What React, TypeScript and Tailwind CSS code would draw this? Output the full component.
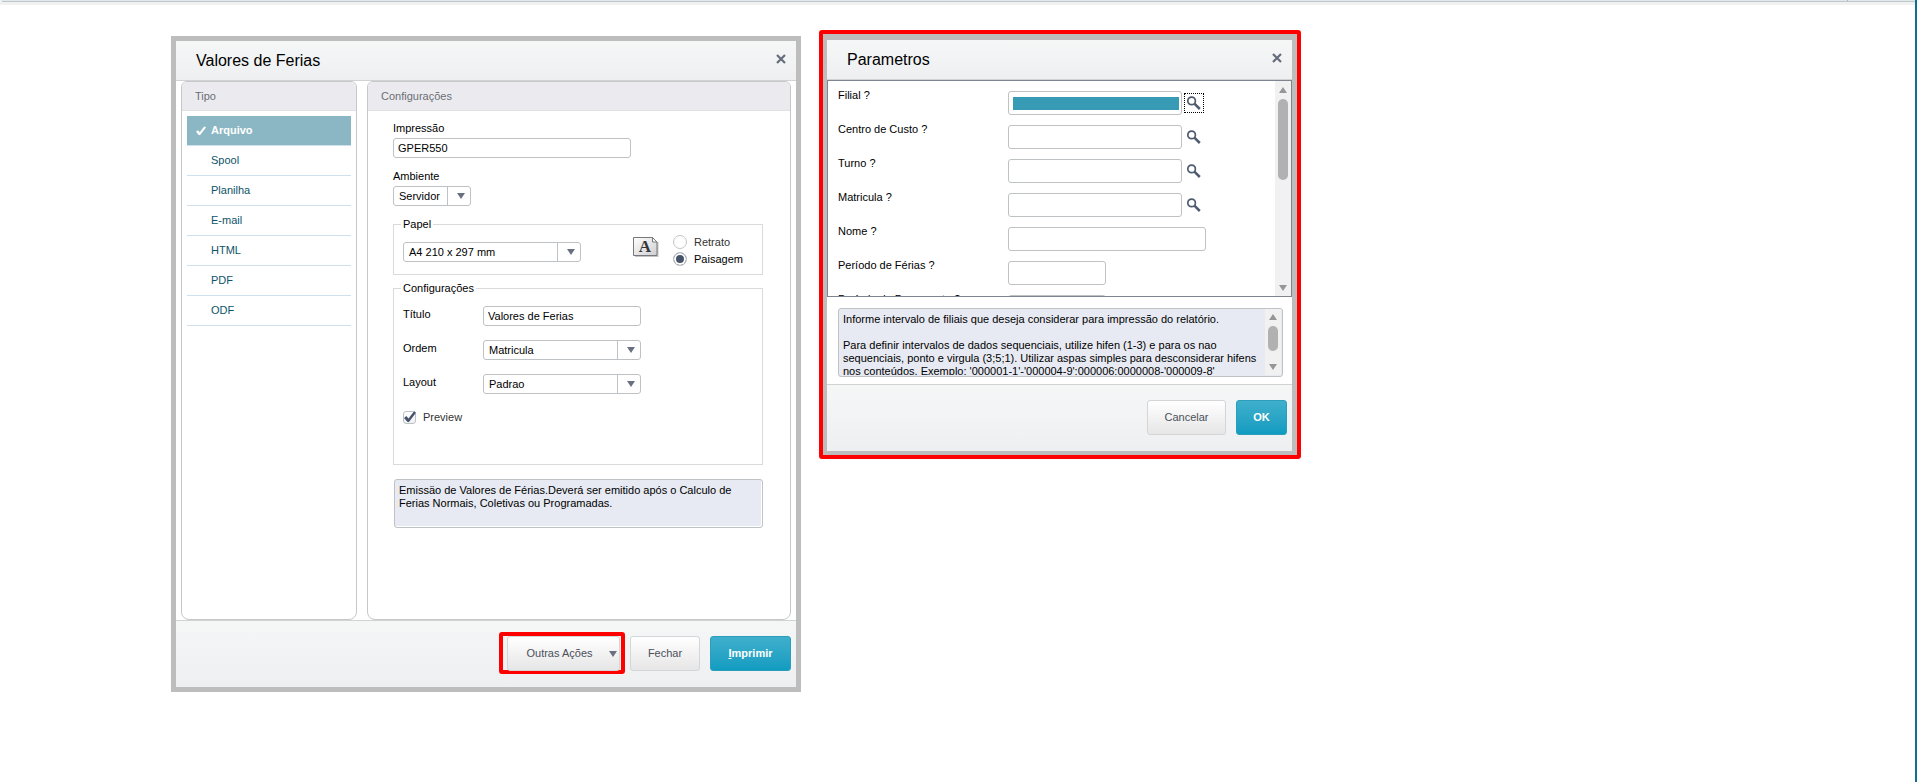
import { useId, type ReactNode } from "react";
import clsx from "clsx";

const outputTypes = ["Arquivo", "Spool", "Planilha", "E-mail", "HTML", "PDF", "ODF"];

const params = [
  { label: "Filial ?", width: "w-[174px]", lookup: true, filled: true },
  { label: "Centro de Custo ?", width: "w-[174px]", lookup: true },
  { label: "Turno ?", width: "w-[174px]", lookup: true },
  { label: "Matricula ?", width: "w-[174px]", lookup: true },
  { label: "Nome ?", width: "w-[198px]" },
  { label: "Período de Férias ?", width: "w-[98px]" },
  { label: "Período de Pagamento ?", width: "w-[98px]" },
];

const helpText = `Informe intervalo de filiais que deseja considerar para impressão do relatório.

Para definir intervalos de dados sequenciais, utilize hifen (1-3) e para os nao sequenciais, ponto e virgula (3;5;1). Utilizar aspas simples para desconsiderar hifens nos conteúdos. Exemplo: '000001-1'-'000004-9':000006:0000008-'000009-8'`;

function Triangle({ up, className }: { up?: boolean; className?: string }) {
  return (
    <svg viewBox="0 0 8 6" className={clsx("h-1.5 w-2 shrink-0", className)} fill="currentColor" aria-hidden="true">
      <path d={up ? "M0 6 4 0 8 6Z" : "M0 0H8L4 6Z"} />
    </svg>
  );
}

function CheckMark({ className }: { className?: string }) {
  return (
    <svg viewBox="0 0 12 12" className={className} fill="none" stroke="currentColor" aria-hidden="true">
      <path d="M1.2 6 4.6 10" strokeWidth="3" />
      <path d="M3.8 10.4 11 1" strokeWidth="2.4" />
    </svg>
  );
}

function Magnifier() {
  return (
    <svg viewBox="0 0 14 14" className="h-3.5 w-3.5" fill="none" stroke="#4f5b70" aria-hidden="true">
      <circle cx="4.6" cy="4.9" r="3.8" strokeWidth="1.7" />
      <path d="M7.4 7.6 12.8 13" strokeWidth="2.5" />
    </svg>
  );
}

function LandscapeIcon() {
  return (
    <svg viewBox="0 0 26 21" className="h-[21px] w-[26px]" aria-hidden="true">
      <defs>
        <linearGradient id="sheet" x1="0" y1="0" x2="1" y2="1">
          <stop offset="0" stopColor="#ffffff" />
          <stop offset="1" stopColor="#cfcfd1" />
        </linearGradient>
      </defs>
      <path d="M2 5H25.5V20H2Z" fill="#c4c4c4" />
      <path d="M.5 .5H19.5L24 5V18.5H.5Z" fill="url(#sheet)" stroke="#77797c" />
      <path d="M19.5 .5V5H24Z" fill="#fafafa" stroke="#77797c" strokeLinejoin="round" />
      <text x="12" y="15" textAnchor="middle" fontFamily="Liberation Serif, serif" fontWeight="700" fontSize="17" fill="#33363b">
        A
      </text>
    </svg>
  );
}

function ScrollBar({ thumb, className }: { thumb: string; className?: string }) {
  return (
    <div className={clsx("flex w-4 shrink-0 flex-col items-center bg-[#f1f1f1] text-[#969696]", className)}>
      <Triangle up />
      <div className={clsx("mt-1.5 w-2.5 rounded-full bg-[#b1b1b1]", thumb)} />
      <Triangle className="mt-auto" />
    </div>
  );
}

function TitleBar({ title }: { title: string }) {
  return (
    <header className="flex h-10 items-center justify-between border-b border-[#d0d2d3] bg-linear-to-b from-[#f5f7f7] to-[#edeff1] pr-2.5 pl-5">
      <h2 className="text-base">{title}</h2>
      <button type="button" aria-label="Fechar" className="-mt-1 text-[#656d7b]">
        <svg viewBox="0 0 10 10" className="h-2.5 w-2.5" stroke="currentColor" strokeWidth="2.2" aria-hidden="true">
          <path d="M1 1 9 9M9 1 1 9" />
        </svg>
      </button>
    </header>
  );
}

function DialogFooter({ children }: { children: ReactNode }) {
  return (
    <footer className="flex h-[67px] items-start justify-end gap-2.5 border-t border-[#d0d2d3] bg-linear-to-b from-[#f5f7f7] to-[#edeff1] pt-[15px] pr-[5px]">
      {children}
    </footer>
  );
}

function Button({ primary, className, children }: { primary?: boolean; className?: string; children: ReactNode }) {
  return (
    <button
      type="button"
      className={clsx(
        "flex h-[35px] items-center justify-center rounded-[3px] border bg-linear-to-b",
        primary
          ? "border-[#2c9dbb] from-[#3eafcc] to-[#0f9cc1] font-bold text-white"
          : "border-[#d3d5d7] from-white to-[#e6e6e7] text-[#4b505a]",
        className,
      )}
    >
      {children}
    </button>
  );
}

function Panel({ title, className, children }: { title: string; className?: string; children: ReactNode }) {
  return (
    <section className={clsx("rounded-t-md rounded-b-lg border border-[#c5c7c9] bg-white", className)}>
      <h3 className="flex h-[29px] items-center rounded-t-[5px] border-b border-[#dfe0e2] bg-[#ebebef] pl-[13px] text-[#6b6e75]">
        {title}
      </h3>
      {children}
    </section>
  );
}

function SelectBox({ id, value, className }: { id?: string; value: string; className: string }) {
  return (
    <div className={clsx("relative h-5", className)}>
      <select
        id={id}
        aria-label={id ? undefined : "Papel"}
        className="h-5 w-full appearance-none rounded-[3px] border border-[#bfc2c4] bg-white pl-[5px]"
      >
        <option>{value}</option>
      </select>
      <span className="pointer-events-none absolute inset-y-0 right-0 flex w-6 items-center justify-center border-l border-[#bfc2c4] pl-0.5 text-[#687081]">
        <Triangle />
      </span>
    </div>
  );
}

const inputClass = "h-5 rounded-[3px] border border-[#bfc2c4] bg-white px-1";

function FieldRow({ id, label, children }: { id: string; label: string; children: ReactNode }) {
  return (
    <div className="flex items-start">
      <label htmlFor={id} className="w-20 pt-0.5">
        {label}
      </label>
      {children}
    </div>
  );
}

function PrintDialog() {
  return (
    <div role="dialog" aria-label="Valores de Ferias" className="mt-1.5 w-[630px] border-5 border-[#bdbdbd] bg-white">
      <TitleBar title="Valores de Ferias" />

      <div className="flex min-h-[539px] gap-2.5 px-[5px]">
        <Panel title="Tipo" className="w-44">
          <ul className="p-[5px]">
            {outputTypes.map((type, i) => (
              <li key={type} className="border-b border-[#cfdfeb]">
                <button
                  type="button"
                  className={clsx(
                    "flex h-[29px] w-full items-center",
                    i === 0 ? "bg-[#8bb7c4] font-bold text-white" : "text-[#0d5468]",
                  )}
                >
                  <span className="flex w-6 justify-end pr-[5px]">
                    {i === 0 && <CheckMark className="h-2.5 w-2.5" />}
                  </span>
                  {type}
                </button>
              </li>
            ))}
          </ul>
        </Panel>

        <Panel title="Configurações" className="flex-1">
          <form className="flex flex-col px-[25px] pt-[11px]">
            <label htmlFor="impressao">Impressão</label>
            <input id="impressao" defaultValue="GPER550" className={clsx(inputClass, "mt-[3px] w-[238px]")} />

            <label htmlFor="ambiente" className="mt-3">
              Ambiente
            </label>
            <SelectBox id="ambiente" value="Servidor" className="mt-[3px] w-[78px]" />

            <fieldset className="mt-3 mr-[2px] border border-[#d8dadb] px-[9px] pb-3">
              <legend className="-ml-0.5 px-0.5">Papel</legend>
              <div className="flex items-start pt-[11px]">
                <SelectBox value="A4 210 x 297 mm" className="w-[178px]" />
                <div className="-mt-[5px] ml-[52px]">
                  <LandscapeIcon />
                </div>
                <div className="-mt-[7px] -mb-4 ml-3.5 flex flex-col gap-[3px]">
                  {["Retrato", "Paisagem"].map((name) => (
                    <label key={name} className="flex h-3.5 items-center gap-[7px] text-[#333] has-checked:text-black">
                      <input
                        type="radio"
                        name="orientacao"
                        defaultChecked={name === "Paisagem"}
                        className="h-3.5 w-3.5 appearance-none rounded-full border border-[#c3c5c8] bg-white checked:bg-[#46536b] checked:shadow-[inset_0_0_0_2px_#fff]"
                      />
                      {name}
                    </label>
                  ))}
                </div>
              </div>
            </fieldset>

            <fieldset className="mt-[7px] mr-[2px] min-h-[183px] border border-[#d8dadb] px-[9px]">
              <legend className="-ml-0.5 px-0.5">Configurações</legend>
              <div className="flex flex-col gap-3.5 pt-[11px]">
                <FieldRow id="titulo" label="Título">
                  <input id="titulo" defaultValue="Valores de Ferias" className={clsx(inputClass, "w-[158px]")} />
                </FieldRow>
                <FieldRow id="ordem" label="Ordem">
                  <SelectBox id="ordem" value="Matricula" className="w-[158px]" />
                </FieldRow>
                <FieldRow id="layout" label="Layout">
                  <SelectBox id="layout" value="Padrao" className="w-[158px]" />
                </FieldRow>
                <label className="relative mt-[3px] flex items-center gap-[7px] text-[#333]">
                  <input
                    type="checkbox"
                    defaultChecked
                    className="peer h-[13px] w-[13px] appearance-none rounded-[3px] border border-[#bfc2c4] bg-linear-to-b from-white to-[#f1f1f1]"
                  />
                  <CheckMark className="absolute top-0 left-px hidden h-3 w-3 text-[#46536b] peer-checked:block" />
                  Preview
                </label>
              </div>
            </fieldset>

            <textarea
              readOnly
              aria-label="Descrição"
              defaultValue="Emissäo de Valores de Férias.Deverá ser emitido após o Calculo de Ferias Normais, Coletivas ou Programadas."
              className="mt-3.5 mr-[2px] ml-px h-[49px] resize-none overflow-hidden rounded-[3px] border border-[#bfc2c4] bg-[#e7eaf2] px-1 py-1 shadow-[inset_-1px_-1px_0_#fff]"
            />
          </form>
        </Panel>
      </div>

      <DialogFooter>
        {/* highlighted action */}
        <div className="-mt-1 -mr-[5px] h-[42px] w-[126px] rounded-[3px] border-4 border-[#ff0000] pl-1">
          <Button className="h-[34px] w-[113px] gap-4 pl-4">
            Outras Ações
            <Triangle className="text-[#687081]" />
          </Button>
        </div>
        <Button className="w-[70px]">Fechar</Button>
        <Button primary className="w-[81px]">
          <span>
            <u>I</u>mprimir
          </span>
        </Button>
      </DialogFooter>
    </div>
  );
}

function ParamRow({ label, width, lookup, filled }: { label: string; width: string; lookup?: boolean; filled?: boolean }) {
  const id = useId();
  return (
    <div className="flex h-[34px] shrink-0 items-start">
      <label htmlFor={id} className="w-[170px]">
        {label}
      </label>
      <div
        className={clsx(
          "mt-0.5 flex h-6 rounded-[3px] border border-[#bfc2c4] bg-white",
          filled && "pt-[5px] pr-0.5 pb-1 pl-1",
          width,
        )}
      >
        <input id={id} className={clsx("w-full min-w-0 outline-none", filled ? "bg-[#379bb5]" : "px-1")} />
      </div>
      {lookup && (
        <button
          type="button"
          aria-label={`Pesquisar ${label}`}
          className={clsx(
            "mt-1 ml-0.5 flex h-5 w-5 items-center justify-center border border-dotted",
            filled ? "border-black" : "border-transparent",
          )}
        >
          <Magnifier />
        </button>
      )}
    </div>
  );
}

function ParametersDialog() {
  return (
    <div className="w-[482px] rounded-[3px] border-4 border-[#ff0000]">
      <div
        role="dialog"
        aria-label="Parametros"
        className="border-t-6 border-r-5 border-b-4 border-l-4 border-[#bdbdbd] bg-white"
      >
        <TitleBar title="Parametros" />

        <div className="flex h-[217px] overflow-hidden border border-[#80848e]">
          <div className="flex flex-1 flex-col overflow-hidden pt-2 pl-2.5">
            {params.map((param) => (
              <ParamRow key={param.label} {...param} />
            ))}
          </div>
          <ScrollBar thumb="h-[81px]" className="pt-1.5 pb-[5px]" />
        </div>

        <div className="pt-[11px] pr-[9px] pb-[7px] pl-[11px]">
          <div className="flex h-[69px] rounded-[3px] border border-[#bfc2c4] bg-[#e7eaf2] pr-px pb-px">
            <textarea
              readOnly
              aria-label="Ajuda"
              defaultValue={helpText}
              className="flex-1 resize-none overflow-hidden pt-1 pl-1"
            />
            <ScrollBar thumb="h-[25px]" className="pt-[5px] pb-[5px]" />
          </div>
        </div>

        <DialogFooter>
          <Button className="w-[79px]">Cancelar</Button>
          <Button primary className="w-[51px]">
            OK
          </Button>
        </DialogFooter>
      </div>
    </div>
  );
}

export default function App() {
  return (
    <div className="min-h-screen border-r-2 border-[#0d7090] bg-white font-['Liberation_Sans',Arial,sans-serif] text-[11px] leading-[13px] text-black">
      <div className="h-[5px] bg-[#f1f1f1]">
        <div className="ml-0.5 flex h-0.5 justify-end border-b border-[#bdc8cd] bg-[#e2e8ea] pr-[67px]">
          <div className="w-px bg-[#a9b5bb]" />
        </div>
      </div>
      <main className="flex items-start gap-[18px] pt-[25px] pl-[171px]">
        <PrintDialog />
        <ParametersDialog />
      </main>
    </div>
  );
}
